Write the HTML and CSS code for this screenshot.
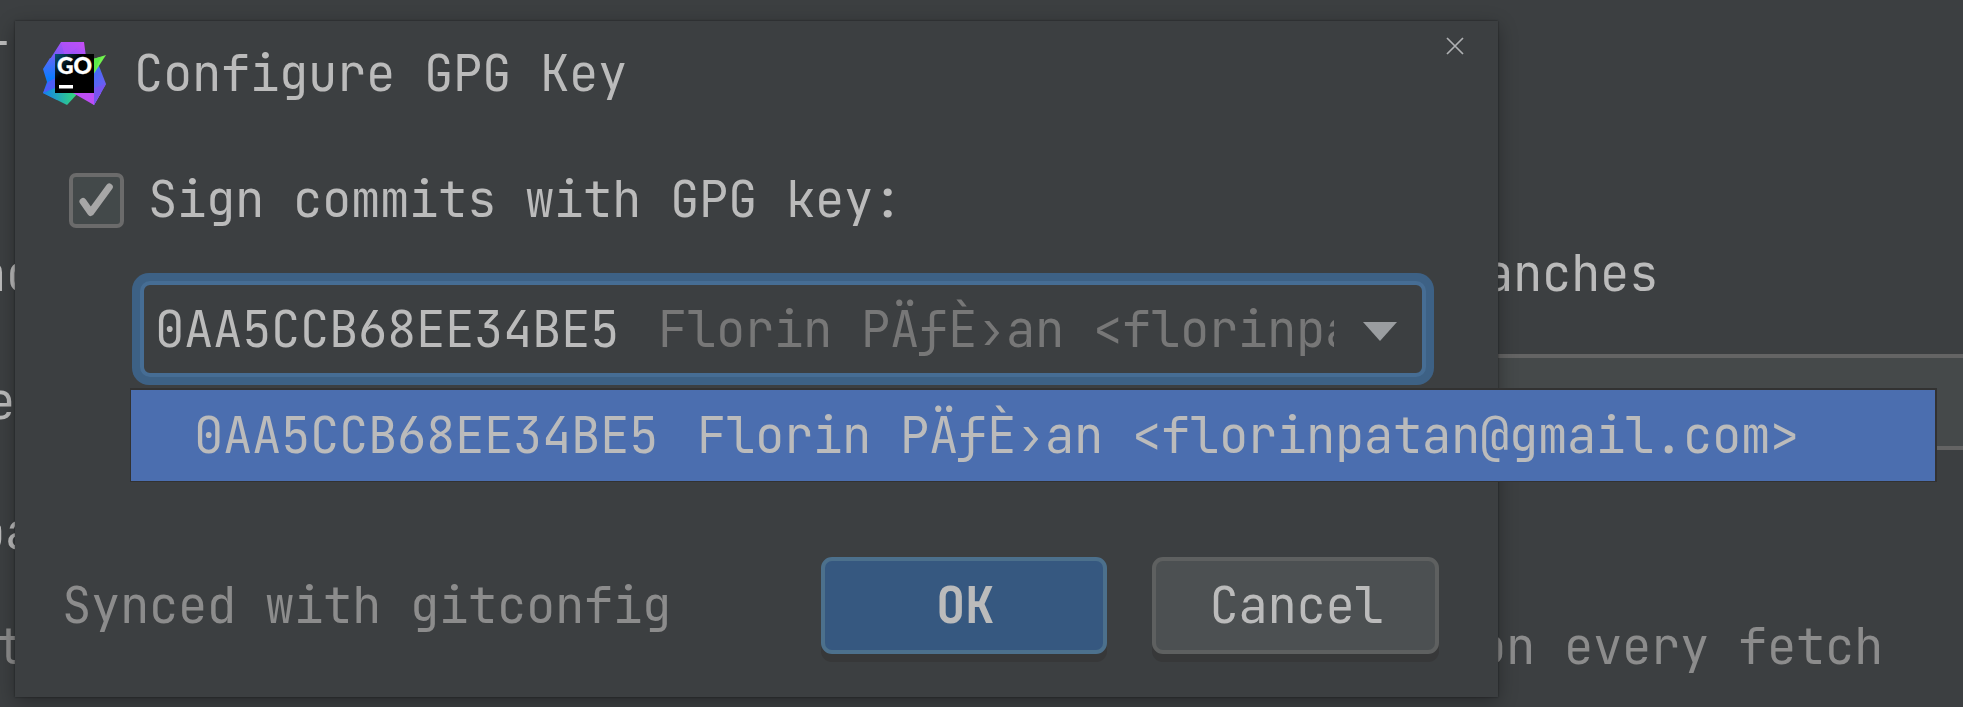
FILE: index.html
```html
<!DOCTYPE html>
<html lang="en">
<head>
<meta charset="utf-8">
<title>Configure GPG Key</title>
<link rel="stylesheet" href="styles.css">
</head>
<body>
<main class="settings">
  <div class="row row-first"><span class="left cut-t">T</span></div>
  <div class="row row-branches"><span class="left cut-nc">nc</span><span class="right-branches">anches</span></div>
  <div class="row row-field"><span class="left cut-e">e</span><span class="field"></span></div>
  <div class="row row-update"><span class="left cut-pa">pa</span></div>
  <div class="row row-hint"><span class="left cut-hint">t</span><span class="right-fetch">on every fetch</span></div>
</main>

<section class="dialog">
  <header class="titlebar">
    <svg class="logo" viewBox="0 0 63 63">
      <defs>
        <linearGradient id="violet" x1="0" y1="1" x2="1" y2="0"><stop offset="0" stop-color="#3d6bff"/><stop offset=".5" stop-color="#8b55f7"/><stop offset="1" stop-color="#d44cf5"/></linearGradient>
        <linearGradient id="blue" x1="0" y1="0" x2="0" y2="1"><stop offset="0" stop-color="#5b68f8"/><stop offset=".5" stop-color="#087cff"/><stop offset="1" stop-color="#2070f8"/></linearGradient>
        <linearGradient id="teal" x1="0" y1="0" x2="1" y2="0"><stop offset="0" stop-color="#1480ee"/><stop offset="1" stop-color="#35e070"/></linearGradient>
        <linearGradient id="right" x1="0" y1="0" x2="1" y2="1"><stop offset="0" stop-color="#187cff"/><stop offset="1" stop-color="#8d52ec"/></linearGradient>
        <linearGradient id="pane" x1="0" y1="0" x2=".5" y2=".5"><stop offset="0" stop-color="#07547f"/><stop offset=".7" stop-color="#000"/></linearGradient>
      </defs>
      <path fill="url(#violet)" d="M18 0H41L44 22H12L2 25Z"/>
      <path fill="#b452fa" opacity=".6" d="M18 0H41L22 15Z"/>
      <path fill="url(#blue)" d="M7 16L0 27L4 40L0 51L14 58L20 20Z"/>
      <path fill="#6751f4" opacity=".7" d="M5 40L14 35V45L0 51Z"/>
      <path fill="url(#teal)" d="M0 51L12 46L36 50L24 63Z"/>
      <path fill="url(#right)" d="M50 24H56L63 42L51 63L36 51Z"/>
      <path fill="#bd4ef5" d="M30 51L36 49L58 51L51 63Z"/>
      <path fill="#7655ef" d="M51 46L63 42L51 63Z"/>
      <path fill="#70f34e" d="M63 13L50 17V33Z"/>
      <path fill="#5bea48" d="M50 17L58 15L50 33Z"/>
      <path fill="url(#pane)" d="M12 12H51V51H12Z"/>
      <path fill="#fff" d="M16 43H30V46.500H16Z"/>
      <text class="logo-text" x="14" y="31.500" textLength="35" lengthAdjust="spacingAndGlyphs">GO</text>
    </svg>
    <h1 class="title">Configure GPG Key</h1>
    <svg class="close" viewBox="0 0 18 18"><path d="M1 1L17 17M17 1L1 17"/></svg>
  </header>

  <div class="option">
    <span class="checkbox"><svg viewBox="0 0 47 47"><path d="M10 24.500L17.700 35.500L36.300 10"/></svg></span>
    <span>Sign commits with GPG key:</span>
  </div>

  <div class="combo">
    <div class="combo-inner">
      <div class="combo-value"><span>0AA5CCB68EE34BE5</span><span class="owner">Florin PÄƒÈ›an &lt;florinpatan@gmail.com&gt;</span></div>
      <svg class="arrow" viewBox="0 0 34 19"><path d="M0 0H34L17 19Z"/></svg>
    </div>
  </div>

  <footer class="footer">
    <span class="note">Synced with gitconfig</span>
    <span class="button primary">OK</span>
    <span class="button">Cancel</span>
  </footer>
</section>

<div class="popup"><span>0AA5CCB68EE34BE5</span><span>Florin PÄƒÈ›an &lt;florinpatan@gmail.com&gt;</span></div>
</body>
</html>
```
FILE: styles.css
```css
* { box-sizing: border-box; }
body {
  margin: 0;
  width: 1963px;
  height: 707px;
  overflow: hidden;
  position: relative;
  background: #3c3f41;
  color: #bbbbbb;
  font: 49px/56px "JetBrains Mono", "DejaVu Sans Mono", monospace;
  font-variant-ligatures: none;
  letter-spacing: -0.4px;
  white-space: nowrap;
}
svg { display: block; flex: none; }

.settings { padding-top: 33px; height: 707px; overflow: hidden; }
.row { display: flex; align-items: center; height: 56px; }
.row-branches { margin-top: 157px; }
.row-field { margin-top: 52px; height: 96px; }
.row-update { margin-top: 54px; }
.row-hint { margin-top: 59px; color: #8c8c8c; }
.left { flex: none; width: 100px; }
.cut-t { margin-left: -20px; }
.cut-nc { margin-left: -23px; }
.cut-e { margin-left: -14px; }
.cut-pa { margin-left: -24px; }
.cut-hint { margin-left: -4px; }
.right-branches { margin-left: 1407px; }
.right-fetch { margin-left: 1381px; }
.field {
  flex: 1;
  height: 96px;
  background: #45494a;
  border: solid #646464;
  border-width: 4px 0;
}

.dialog {
  position: absolute;
  left: 15px;
  top: 21px;
  width: 1483px;
  height: 676px;
  padding-top: 16px;
  background: #3c3f41;
  box-shadow: 0 0 2px rgba(0, 0, 0, .45), 0 5px 18px rgba(0, 0, 0, .32);
}
.titlebar { display: flex; align-items: center; height: 74px; padding: 0 34px 0 28px; }
.logo { width: 63px; height: 63px; margin-top: -1px; }
.logo-text { font: 900 23px/1 Lato, sans-serif; fill: #fff; letter-spacing: 0; stroke: #fff; stroke-width: .4px; }
.title { margin: 0 0 0 28px; font: inherit; }
.close { width: 18px; height: 18px; margin-left: auto; align-self: flex-start; }
.close path { fill: none; stroke: #afb1b3; stroke-width: 1.700; }

.option { display: flex; align-items: center; gap: 24px; height: 56px; margin-top: 61px; padding-left: 54px; }
.checkbox { width: 55px; height: 55px; border: 4px solid #6b6b6b; border-radius: 7px; background: #43494a; }
.checkbox path { fill: none; stroke: #a7a7a7; stroke-width: 7; stroke-linecap: round; stroke-linejoin: round; }

.combo {
  width: 1302px;
  height: 112px;
  margin: 45px 0 0 117px;
  padding: 8px;
  border-radius: 17px;
  background: #3d6185;
}
.combo-inner {
  display: flex;
  align-items: center;
  justify-content: space-between;
  height: 96px;
  padding: 1px 25px 0 11px;
  border: 4px solid #466d94;
  border-radius: 10px;
  background: #3c3f41;
}
.combo-value { display: flex; gap: 39px; width: 1179px; padding: 12px 0; overflow: hidden; }
.owner { color: #777777; }
.arrow { width: 34px; height: 19px; margin-top: 3px; }
.arrow path { fill: #9a9da0; }

.popup {
  position: absolute;
  left: 130px;
  top: 388px;
  width: 1807px;
  height: 94px;
  display: flex;
  gap: 39px;
  padding: 18px 0 0 63px;
  border: solid #323232;
  border-width: 2px 2px 1px 1px;
  background: #4b6eaf;
}

.footer { display: flex; align-items: center; height: 97px; margin-top: 172px; padding: 0 59px 0 47px; }
.note { margin-right: auto; color: #8c8c8c; }
.button {
  width: 287px;
  height: 97px;
  margin-left: 45px;
  padding: 17px 0 0 2px;
  text-align: center;
  border: 4px solid #5e6060;
  border-radius: 11px;
  background: #4c5052;
  box-shadow: 0 8px 0 #373839;
}
.primary { width: 286px; font-weight: 700; background: #365880; border-color: #4c708c; }
```
